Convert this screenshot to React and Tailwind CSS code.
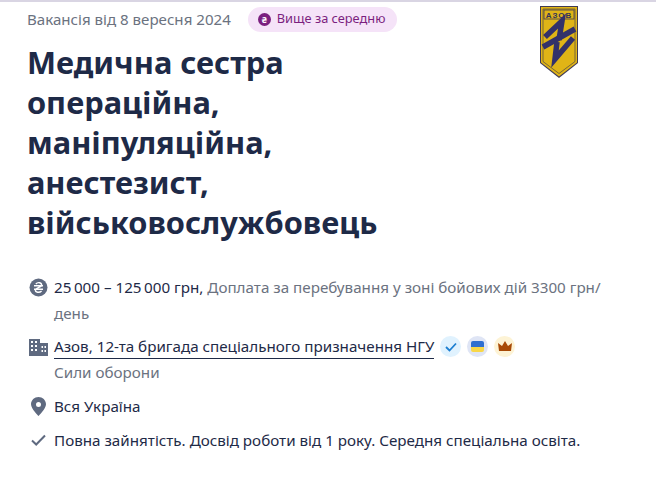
import React from 'react';

const font = { fontFamily: '"Noto Sans", "Open Sans", sans-serif' };

function Row({ icon, children }) {
  return (
    <div className="flex gap-[6px] mb-2">
      <div className="w-5 h-[26px] shrink-0 flex items-center justify-center">{icon}</div>
      <div className="flex-1 text-[15.2px] leading-[26px] text-[#1e2a47]">{children}</div>
    </div>
  );
}

function Logo() {
  return (
    <svg width="38" height="72" viewBox="0 0 38 72" className="shrink-0">
      <path d="M0 0H38V57L19 72L0 57Z" fill="#3f3a55" />
      <path d="M1 1H37V56.5L19 70.5L1 56.5Z" fill="#e0b416" />
      <path d="M3 3H35V55.5L19 67.5L3 55.5Z" fill="none" stroke="#5d5340" strokeWidth="0.8" />
      <rect x="4" y="4" width="30" height="9" fill="none" stroke="#3f3a55" strokeWidth="0.8" />
      <text x="19" y="11.5" textAnchor="middle" fontSize="8" fontWeight="700" letterSpacing="1" fill="#33335a" fontFamily="Liberation Sans, sans-serif">АЗОВ</text>
      <g fill="none" stroke="#33316a" strokeWidth="5.5" strokeLinejoin="miter">
        <path d="M5 31L22 15L19 34" />
        <path d="M3 41L35 23" />
        <path d="M33 32L15 53L17 36" />
      </g>
    </svg>
  );
}

export default function App() {
  return (
    <div className="min-h-screen bg-white" style={font}>
      <div className="h-[3px] border-t-2 border-[#d9d5e3]" />
      <div className="flex pl-[27px] pr-[78px] pt-[3px]">
        <div className="flex-1">
          <div className="flex items-center gap-[17px] h-[26px] text-[15.1px] text-[#6b7280]">
            <span>Вакансія від 8 вересня 2024</span>
            <span className="flex items-center gap-[6px] h-[25px] pl-[10px] pr-[12px] rounded-full bg-[#f5e3f8] text-[12.8px] text-[#7b1f7f]">
              <span className="w-[13px] h-[13px] rounded-full bg-[#7b1f7f] text-white text-[9px] leading-[13px] text-center font-bold">₴</span>
              Вище за середню
            </span>
          </div>
          <h1 className="mt-[10px] text-[30.8px] leading-[40px] font-bold text-[#1e2a47] w-[380px]">
            Медична сестра операційна, маніпуляційна, анестезист, військовослужбовець
          </h1>
        </div>
        <Logo />
      </div>
      <div className="pl-[28px] pr-[46px] mt-[32px]">
        <Row icon={
          <svg width="19" height="19" viewBox="0 0 19 19"><circle cx="9.5" cy="9.5" r="9" fill="#5f6a80" /><path d="M5 7.8H14M5 11.2H14M6.8 6C9 3.6 13 4.6 12.6 7.5C12.2 9.4 6.8 9.6 6.4 12C6.2 14.4 10.4 15.2 12.6 13" fill="none" stroke="#fff" strokeWidth="1.4" /></svg>
        }>
          <span>25{'\u2009'}000 – 125{'\u2009'}000 грн,</span> <span className="text-[#6b7280]">Доплата за перебування у зоні бойових дій 3300 грн/день</span>
        </Row>
        <Row icon={
          <svg width="19" height="17" viewBox="0 0 19 17" fill="#5f6a80"><path d="M0 0H11V4H19V17H0Z" /><path d="M2 2h2v2H2zM6 2h2v2H6zM2 6h2v2H2zM6 6h2v2H6zM2 10h2v2H2zM6 10h2v2H6zM12.5 7h1.5v2h-1.5zM15.5 7h1.5v2h-1.5zM12.5 11h1.5v2h-1.5zM15.5 11h1.5v2h-1.5z" fill="#fff" /></svg>
        }>
          <div className="flex items-center gap-[6px]">
            <span className="border-b border-[#1e2a47] leading-[24px]">Азов, 12-та бригада спеціального призначення НГУ</span>
            <span className="w-[21px] h-[21px] rounded-full bg-[#e0f2fe] flex items-center justify-center">
              <svg width="12" height="10" viewBox="0 0 12 10"><path d="M1 5L4.5 8.5L11 1.5" fill="none" stroke="#1d7fd1" strokeWidth="1.8" /></svg>
            </span>
            <span className="w-[21px] h-[21px] rounded-full bg-[#dfe5f5] flex items-center justify-center">
              <span className="w-[13px] h-[11px] rounded-[2px] overflow-hidden flex flex-col">
                <span className="h-1/2 bg-[#2f6fd0]" />
                <span className="h-1/2 bg-[#f8d748]" />
              </span>
            </span>
            <span className="w-[21px] h-[21px] rounded-full bg-[#fdf3d5] flex items-center justify-center">
              <svg width="14" height="11" viewBox="0 0 14 11"><path d="M1 10L0 2L4 5L7 0L10 5L14 2L13 10Z" fill="#a84a06" /></svg>
            </span>
          </div>
          <div className="text-[#6b7280]">Сили оборони</div>
        </Row>
        <Row icon={
          <svg width="15" height="19" viewBox="0 0 15 19"><path fillRule="evenodd" d="M7.5 0C3.4 0 0 3.2 0 7.3C0 12 7.5 19 7.5 19S15 12 15 7.3C15 3.2 11.6 0 7.5 0ZM7.5 5A2.5 2.5 0 1 1 7.5 10A2.5 2.5 0 0 1 7.5 5Z" fill="#5f6a80" /></svg>
        }>
          Вся Україна
        </Row>
        <Row icon={
          <svg width="15" height="12" viewBox="0 0 15 12"><path d="M1 6.5L5.2 10.5L14 1.5" fill="none" stroke="#5f6a80" strokeWidth="2" /></svg>
        }>
          Повна зайнятість. Досвід роботи від 1 року. Середня спеціальна освіта.
        </Row>
      </div>
    </div>
  );
}
